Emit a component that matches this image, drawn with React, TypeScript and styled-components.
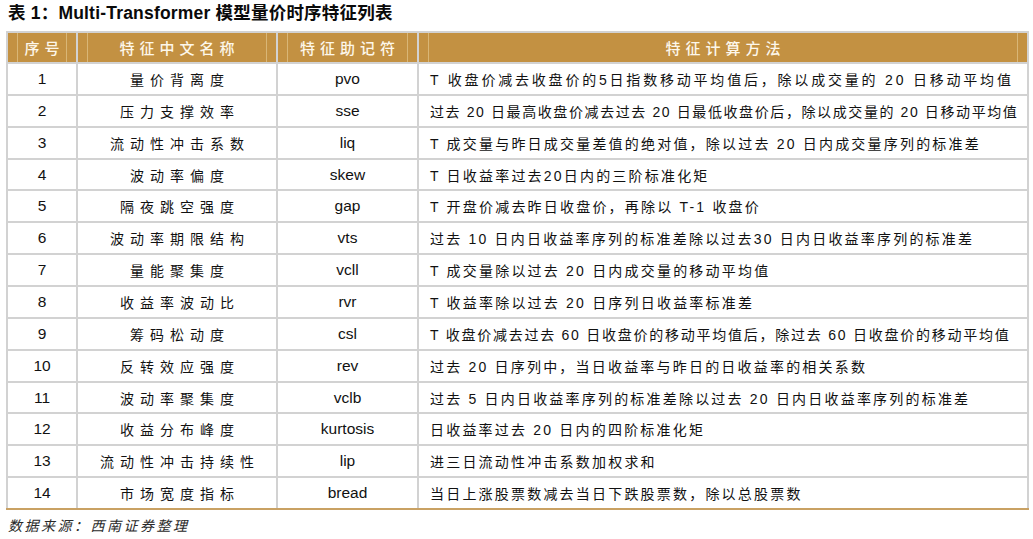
import React from 'react';
import styled, { createGlobalStyle } from 'styled-components';

const GlobalStyle = createGlobalStyle`
  html, body {
    margin: 0;
    padding: 0;
    background: #ffffff;
  }
  body {
    font-family: "Liberation Sans", "Noto Sans CJK SC", sans-serif;
    color: #111111;
  }
`;

type Feature = {
  id: number;
  name: string;
  code: string;
  method: string;
  tracking?: number;
};

const features: Feature[] = [
  { id: 1, name: '量价背离度', code: 'pvo', method: 'T 收盘价减去收盘价的5日指数移动平均值后，除以成交量的 20 日移动平均值', tracking: 2.8 },
  { id: 2, name: '压力支撑效率', code: 'sse', method: '过去 20 日最高收盘价减去过去 20 日最低收盘价后，除以成交量的 20 日移动平均值', tracking: 1.6 },
  { id: 3, name: '流动性冲击系数', code: 'liq', method: 'T 成交量与昨日成交量差值的绝对值，除以过去 20 日内成交量序列的标准差' },
  { id: 4, name: '波动率偏度', code: 'skew', method: 'T 日收益率过去20日内的三阶标准化矩' },
  { id: 5, name: '隔夜跳空强度', code: 'gap', method: 'T 开盘价减去昨日收盘价，再除以 T-1 收盘价' },
  { id: 6, name: '波动率期限结构', code: 'vts', method: '过去 10 日内日收益率序列的标准差除以过去30 日内日收益率序列的标准差' },
  { id: 7, name: '量能聚集度', code: 'vcll', method: 'T 成交量除以过去 20 日内成交量的移动平均值' },
  { id: 8, name: '收益率波动比', code: 'rvr', method: 'T 收益率除以过去 20 日序列日收益率标准差' },
  { id: 9, name: '筹码松动度', code: 'csl', method: 'T 收盘价减去过去 60 日收盘价的移动平均值后，除过去 60 日收盘价的移动平均值', tracking: 1.75 },
  { id: 10, name: '反转效应强度', code: 'rev', method: '过去 20 日序列中，当日收益率与昨日的日收益率的相关系数' },
  { id: 11, name: '波动率聚集度', code: 'vclb', method: '过去 5 日内日收益率序列的标准差除以过去 20 日内日收益率序列的标准差' },
  { id: 12, name: '收益分布峰度', code: 'kurtosis', method: '日收益率过去 20 日内的四阶标准化矩' },
  { id: 13, name: '流动性冲击持续性', code: 'lip', method: '进三日流动性冲击系数加权求和' },
  { id: 14, name: '市场宽度指标', code: 'bread', method: '当日上涨股票数减去当日下跌股票数，除以总股票数' },
];

const Page = styled.div`
  width: 1033px;
  height: 539px;
  padding: 0 6px;
  box-sizing: border-box;
  overflow: hidden;
`;

const Title = styled.h1`
  margin: 0;
  height: 31px;
  padding-left: 2px;
  line-height: 26px;
  font-size: 17.5px;
  font-weight: 700;
  letter-spacing: 0.2px;
  font-family: "Liberation Sans", "Noto Sans CJK SC", sans-serif;
  color: #0a0a0a;
  white-space: nowrap;
`;

const Table = styled.table`
  width: 1021px;
  border-collapse: collapse;
  table-layout: fixed;
`;

const HeadCell = styled.th<{ $w: number }>`
  width: ${p => p.$w}px;
  height: 31px;
  padding: 0;
  box-sizing: border-box;
  border: 2px solid #d2d2d2;
  border-bottom: none;
  background:
    linear-gradient(
      to right,
      transparent 9px,
      #d9b676 9px,
      #d9b676 10px,
      transparent 10px,
      transparent calc(100% - 10px),
      #d9b676 calc(100% - 10px),
      #d9b676 calc(100% - 9px),
      transparent calc(100% - 9px)
    ),
    #c39142;
  color: #fdf7ea;
  font-family: "Noto Sans CJK SC", sans-serif;
  font-size: 15px;
  font-weight: 500;
  letter-spacing: 5px;
  text-indent: 5px;
  text-align: center;
`;

const Row = styled.tr`
  height: 31.86px;

  &:last-child > td {
    border-bottom-color: #c9a163;
  }
`;

const Cell = styled.td<{ $spaced?: boolean }>`
  padding: 0;
  border: 2px solid #d2d2d2;
  text-align: center;
  font-size: ${p => (p.$spaced ? '14px' : '15.5px')};
  letter-spacing: ${p => (p.$spaced ? '6px' : '0')};
  text-indent: ${p => (p.$spaced ? '6px' : '0')};
  color: #111111;
  white-space: nowrap;
  overflow: hidden;
  vertical-align: middle;
`;

const MethodCell = styled.td<{ $tracking: number }>`
  padding: 0 0 0 11px;
  border: 2px solid #d2d2d2;
  text-align: left;
  font-size: 14px;
  letter-spacing: ${p => p.$tracking}px;
  color: #111111;
  white-space: nowrap;
  overflow: hidden;
  vertical-align: middle;
`;

const Source = styled.p`
  margin: 0;
  padding-left: 2px;
  line-height: 30px;
  font-size: 14px;
  font-style: italic;
  letter-spacing: 2.5px;
  color: #2a2a2a;
  font-family: "Noto Sans CJK SC", sans-serif;
`;

const App: React.FC = () => {
  return (
    <>
      <GlobalStyle />
      <Page>
        <Title>表 1：Multi-Transformer 模型量价时序特征列表</Title>
        <Table>
          <thead>
            <tr>
              <HeadCell $w={70}>序号</HeadCell>
              <HeadCell $w={200}>特征中文名称</HeadCell>
              <HeadCell $w={141}>特征助记符</HeadCell>
              <HeadCell $w={610}>特征计算方法</HeadCell>
            </tr>
          </thead>
          <tbody>
            {features.map(f => (
              <Row key={f.id}>
                <Cell>{f.id}</Cell>
                <Cell $spaced>{f.name}</Cell>
                <Cell>{f.code}</Cell>
                <MethodCell $tracking={f.tracking ?? 2.2}>{f.method}</MethodCell>
              </Row>
            ))}
          </tbody>
        </Table>
        <Source>数据来源：西南证券整理</Source>
      </Page>
    </>
  );
};

export default App;
